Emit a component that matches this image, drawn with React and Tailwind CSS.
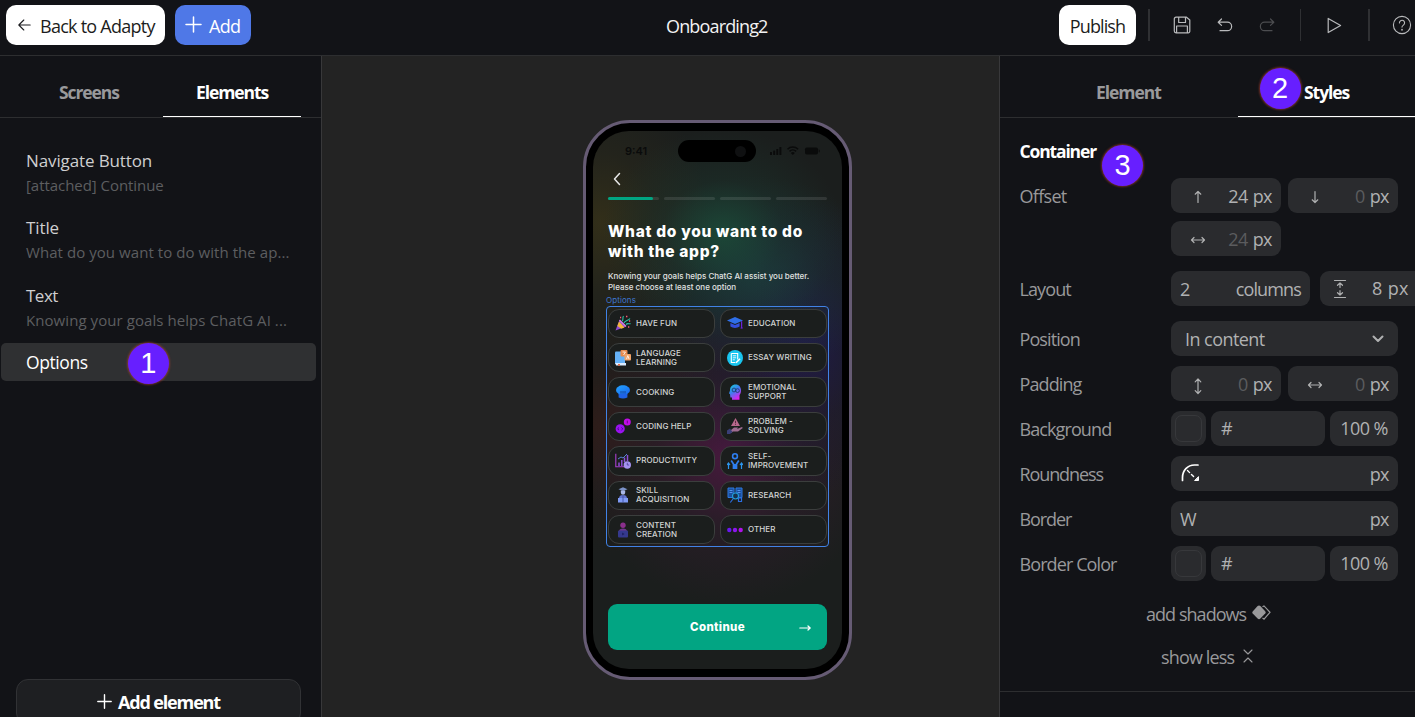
const UI = "[font-family:'Open_Sans',sans-serif]";

/* ---------- small building blocks ---------- */

function Stroke({ w = 20, h = 20, sw = 1.2, className = "", children }) {
  return (
    <svg
      width={w}
      height={h}
      viewBox={`0 0 ${w} ${h}`}
      fill="none"
      stroke="currentColor"
      strokeWidth={sw}
      strokeLinecap="round"
      strokeLinejoin="round"
      className={`shrink-0 ${className}`}
    >
      {children}
    </svg>
  );
}

function Badge({ n, className }) {
  return (
    <div
      className={`absolute z-10 flex size-[41px] items-center justify-center rounded-full bg-[#671fff] text-[29px] leading-none text-white shadow-[0_0_2px_1px_rgba(190,70,50,0.55)] [font-family:'Liberation_Sans',sans-serif] ${className}`}
    >
      {n}
    </div>
  );
}

/* ---------- header ---------- */

function Header() {
  return (
    <header className="relative flex h-14 shrink-0 items-start border-b border-[#2d2e30] pl-1.5 pt-[5px]">
      <button className="flex h-10 w-[159px] items-center rounded-[10px] bg-white pl-3 pt-0.5 text-[18px] tracking-[-0.75px] text-[#1c1d20]">
        <Stroke w={13} h={12} sw={1.1} className="mr-[9px] -mt-0.5">
          <path d="M12.2 6H.8M5.8 1 .8 6l5 5" />
        </Stroke>
        <span className="whitespace-nowrap">Back to Adapty</span>
      </button>
      <button className="ml-2.5 flex h-10 w-[76px] items-center rounded-[10px] bg-[#4f78e7] pl-2.5 pt-0.5 text-[18px] tracking-[-0.7px] text-white">
        <Stroke w={17} h={17} sw={1.5} className="mr-[7px] -mt-1">
          <path d="M8.5 1v15M1 8.5h15" />
        </Stroke>
        Add
      </button>
      <div className="mt-[9px] ml-[415px] w-[102px] whitespace-nowrap text-[18px] leading-6 tracking-[-0.85px] text-[#f2f2f3]">Onboarding2</div>
      <button className="ml-[291px] h-10 w-[77px] rounded-[10px] bg-white pt-0.5 text-center text-[18px] tracking-[-0.9px] text-[#1c1d20]">
        Publish
      </button>
      <div className="mt-1 ml-3 h-8 w-0.5 bg-[#2f3033]" />
      <div className="flex h-10 items-center text-[#b9babc]">
        <Stroke w={18} h={18} className="ml-[23px]">
          <path d="M3 1.2h10.5L16.8 4v11.3a1.5 1.5 0 0 1-1.5 1.5H3a1.7 1.7 0 0 1-1.7-1.7V3A1.7 1.7 0 0 1 3 1.2ZM5.7 1.2v5.3h6.8V1.2M3.6 16.8V10h10.8v6.8" />
        </Stroke>
        <Stroke w={16} h={14} className="ml-[26px]">
          <path d="M4.5 1 1.2 4.2l3.3 3.2M1.2 4.2h9.2a4.2 4.2 0 0 1 0 8.5H3" />
        </Stroke>
        <Stroke w={16} h={14} className="ml-[26px] text-[#4c4d50]">
          <path d="M11.5 1l3.3 3.2-3.3 3.2M14.8 4.2H5.6a4.2 4.2 0 0 0 0 8.5H13" />
        </Stroke>
      </div>
      <div className="mt-1 ml-[25px] h-8 w-px bg-[#2f3033]" />
      <Stroke w={15} h={17} className="mt-3 ml-[26px] text-[#b9babc]">
        <path d="M1.2 1.4v14.2L13.6 8.5Z" />
      </Stroke>
      <div className="mt-1 ml-[26px] h-8 w-0.5 bg-[#2f3033]" />
      <Stroke w={20} h={20} sw={1.1} className="mt-[10px] ml-[22px] text-[#b9babc]">
        <circle cx="10" cy="10" r="8.6" />
        <path d="M7.4 8a2.6 2.6 0 1 1 4 2.1c-.9.6-1.4 1-1.4 2" />
        <path d="M10 14.6v.3" strokeWidth="1.6" />
      </Stroke>
    </header>
  );
}

/* ---------- left panel ---------- */

const elements = [
  ["Navigate Button", "[attached] Continue", "tracking-[-0.12px]", "tracking-[-0.05px]"],
  ["Title", "What do you want to do with the ap...", "tracking-[-0.1px]", "tracking-[0.06px]"],
  ["Text", "Knowing your goals helps ChatG AI ...", "tracking-[-0.5px]", "tracking-[0.07px]"],
];

function LeftPanel() {
  return (
    <aside className="relative flex w-[322px] shrink-0 flex-col border-r border-[#38383a]">
      <div className="flex h-[62px] shrink-0 border-b border-[#2d2e30] text-[17.5px] font-bold leading-6 tracking-[-1.1px]">
        <div className="w-[163px] whitespace-nowrap pl-[59px] pt-6 text-[#99999b]">Screens</div>
        <div className="h-[61px] w-[138px] border-b border-white pt-6 text-center text-white">Elements</div>
      </div>
      <div className="mt-[31px] flex flex-col gap-[18.300px] pl-[26px]">
        {elements.map(([name, sub, t1, t2]) => (
          <div key={name} className="whitespace-nowrap">
            <div className={`h-6 text-[17px] leading-6 text-[#cfcfd0] ${t1}`}>{name}</div>
            <div className={`h-[25px] text-[15px] leading-6 text-[#5d5e60] ${t2}`}>{sub}</div>
          </div>
        ))}
      </div>
      <div className="relative mt-[10.400px] ml-px h-[38px] w-[315px] rounded-[5px] bg-[#2f3032] pl-[25px] pt-[7px] text-[17.5px] leading-6 tracking-[-0.4px] text-white">
        Options
        <Badge n="1" className="top-0 left-[126.500px]" />
      </div>
      <div className="mt-auto ml-4 -mb-2 flex h-[46px] w-[285px] shrink-0 items-start justify-center rounded-xl border border-[#313235] bg-[#1e1f22] pt-2.5 text-[18px] font-bold leading-6 tracking-[-1.150px] text-white">
        <Stroke w={15} h={15} sw={1.4} className="mr-[6px] mt-[4px]">
          <path d="M7.5 .8v13.4M.8 7.5h13.4" />
        </Stroke>
        Add element
      </div>
    </aside>
  );
}

/* ---------- option icons (16 x 16) ---------- */

const optionIcons = {
  fun: (
    <>
      <path d="M.5 15.5 4.5 5l6.5 6.5Z" fill="#8f4bd0" />
      <path d="M2.3 11 4 6.5l5.5 6L6.3 13.7Z" fill="#f3b63a" />
      <path d="M4.5 5 11 11.5" stroke="#d67be0" strokeWidth="1.5" />
      <path d="M7 6c2-1 0-3 1.5-5M9 8c1-3 4-2 6-4.5M11 9.5c2-2 3 0 4.5-1" stroke="#28c3a8" strokeWidth="1.1" fill="none" />
      <path d="M11 1.5h1.4M5 2.5h1.2M14 6h1.2M13 12h1.3" stroke="#ff5a78" strokeWidth="1.3" />
    </>
  ),
  education: (
    <>
      <path d="M0 5.6 8 2l8 3.6L8 9Z" fill="#2f6fe8" />
      <path d="M3.4 8v3.6c2.6 1.8 6.6 1.8 9.2 0V8L8 10Z" fill="#3450dd" />
      <path d="M14.6 6.2v7" stroke="#6b22d8" strokeWidth="1.2" />
      <path d="M13.4 13.6l1.2-2.6 1.3 2.6Z" fill="#6b22d8" />
    </>
  ),
  language: (
    <>
      <rect x="0" y="1.5" width="10" height="12.5" rx="1" fill="#65b1f7" />
      <path d="M0 13h11v2.4H1.2Z" fill="#dcecff" />
      <rect x="5.5" y="0" width="7" height="6.5" rx="1" fill="#e88a4e" />
      <rect x="9.5" y="4" width="6.5" height="6.5" rx="1" fill="#f1a369" />
      <path d="M7.5 2h3l-2 3M11.5 9.2l1.3-3.6 1.3 3.6" stroke="#fff" strokeWidth=".8" fill="none" />
      <path d="M3 14v2l1-.8 1 .8v-2Z" fill="#e46e4c" />
    </>
  ),
  essay: (
    <>
      <circle cx="8" cy="8" r="8" fill="#19c5ef" />
      <path d="M4.3 3.5h6.4v6M4.3 3.5v9h4" stroke="#fff" strokeWidth="1.1" fill="none" />
      <path d="M5.8 5.8h3.4M5.8 7.8h3.4M5.8 9.8h2" stroke="#fff" strokeWidth=".9" />
      <path d="m9 12.8 4-4" stroke="#fff" strokeWidth="1.6" />
    </>
  ),
  cooking: (
    <>
      <path d="M4 10.500 3.200 9.500A3.700 3.700 0 0 1 3.600 2.600C5 1.200 6 1.200 8 1.200s3 0 4.400 1.400A3.700 3.700 0 0 1 12.800 9.500l-.8 1Z" fill="url(#cook)" />
      <path d="M3.600 10h8.800v3.500q-4.400 2-8.800 0Z" fill="#1f62e6" />
      <path d="M6 7v2.600M8 7v2.600M10 7v2.600" stroke="#123a8a" strokeWidth=".8" />
      <defs>
        <linearGradient id="cook" x1="0" y1="0" x2="1" y2="1">
          <stop offset="0" stopColor="#22a6ff" />
          <stop offset="1" stopColor="#1a66ee" />
        </linearGradient>
      </defs>
    </>
  ),
  emotional: (
    <>
      <path d="M5 15.8v-2.300H3.400L3 10l-1-.6L3 6.500C3 3 5 .5 8.600.5S14 3.200 14 6.400c0 2.300-.7 3.300-1.500 4.600v4.800Z" fill="url(#emo)" />
      <circle cx="7" cy="6" r="1.9" fill="none" stroke="#183a66" strokeWidth=".8" />
      <circle cx="10.500" cy="6.600" r="1.900" fill="none" stroke="#183a66" strokeWidth=".8" />
      <defs>
        <linearGradient id="emo" x1="0" y1="0" x2=".6" y2="1">
          <stop offset="0" stopColor="#12d5d5" />
          <stop offset=".5" stopColor="#3e7df0" />
          <stop offset="1" stopColor="#e020f0" />
        </linearGradient>
      </defs>
    </>
  ),
  coding: (
    <>
      <circle cx="5.2" cy="10.800" r="4.600" fill="#9a12f0" />
      <circle cx="12.300" cy="4" r="3.500" fill="#c20be8" />
      <path d="m4 9.500-1.400 1.300L4 12.100M6.400 9.500l1.400 1.300-1.400 1.300" stroke="#3a0870" strokeWidth=".8" fill="none" />
      <path d="M12.300 2.600v2.800" stroke="#50086a" strokeWidth=".8" />
    </>
  ),
  problem: (
    <>
      <path d="M8.500 0 13 8H4Z" fill="#b8688c" />
      <path d="M8.500 2.800v2.500M8.500 6.200v.8" stroke="#401c2c" strokeWidth=".8" />
      <path d="M4 12 7 9.500h4l-1 1.500 5-2 .8 1L11 13.500H6L4 15Z" fill="#a06c92" />
      <path d="m0 12.500 3-2 2.500 3.500-2.500 2H0Z" fill="#3a3f78" />
    </>
  ),
  productivity: (
    <>
      <path d="M.8.8v13h8.500" stroke="#a93fd0" strokeWidth="1.100" fill="none" />
      <path d="M4 13V9.500M6.800 13V7M9.500 9V4.500M12.500 8V2" stroke="#8d4fd8" strokeWidth="1.500" />
      <path d="m3 6 3-2 2 1 4-4" stroke="#5a8ce8" strokeWidth=".9" fill="none" />
      <circle cx="12.300" cy="12" r="3.700" fill="#a592f0" />
      <path d="M12.300 9.800V12h1.800" stroke="#4a3a98" strokeWidth=".8" fill="none" />
    </>
  ),
  self: (
    <>
      <circle cx="8" cy="3.200" r="2.400" fill="none" stroke="#2e7ef0" strokeWidth="1.600" />
      <path d="M4.200 7.500 6.500 11v5h3v-5l2.300-3.500" stroke="#2e7ef0" strokeWidth="1.700" fill="none" />
      <path d="M1.500 16v-5M0 12l1.500-2L3 12M14.500 16v-5M13 12l1.500-2 1.500 2" stroke="#2b97f0" strokeWidth="1.200" fill="none" />
      <path d="M6.500 11h3v5h-3Z" fill="#2e7ef0" />
    </>
  ),
  skill: (
    <>
      <path d="M3.500 2.200 8 .3l4.500 1.900L8 4Z" fill="#7c93c8" />
      <path d="M5.800 3.500h4.400v2a2.200 2.200 0 0 1-4.400 0Z" fill="#a9b7e8" />
      <path d="M4 11.500C4 9 5.500 8 8 8s4 1 4 3.500Z" fill="#6475d0" />
      <path d="M3 11h10v4.500H3Z" fill="#7f9af4" />
      <path d="M8 8v7.500" stroke="#3c4c9a" strokeWidth=".8" />
    </>
  ),
  research: (
    <>
      <path d="M1 1h6v9.500H1ZM9 1h6v9.500H9Z" fill="#1b4f9c" stroke="#2d78e0" strokeWidth="1" />
      <path d="M2.500 3.500h3M2.500 5.500h3M10.500 3.500h3M10.500 5.500h3" stroke="#5ea2ff" strokeWidth=".8" />
      <circle cx="8.500" cy="9" r="3" fill="#16324f" stroke="#21a0d8" strokeWidth="1.100" />
      <path d="m6.300 11.500-3 4M11.500 11h3v3.500h-3Z" stroke="#2a6ee0" strokeWidth="1.200" fill="none" />
    </>
  ),
  content: (
    <>
      <circle cx="8" cy="3.200" r="2.700" fill="#8a2f8c" />
      <path d="M4 9.500C4 7.500 5.500 6.500 8 6.500s4 1 4 3Z" fill="#71358f" />
      <rect x="3" y="8.500" width="10" height="7" rx="1" fill="#35398e" />
      <path d="m7.200 10.500 2.300 1.500-2.300 1.500Z" fill="#1c1f5c" />
    </>
  ),
  other: (
    <>
      <circle cx="2.300" cy="8" r="2.200" fill="#6a18f0" />
      <circle cx="8" cy="8" r="2.200" fill="#8c16ee" />
      <circle cx="13.700" cy="8" r="2.200" fill="#b012ea" />
    </>
  ),
};

const options = [
  ["fun", ["HAVE FUN"]],
  ["education", ["EDUCATION"]],
  ["language", ["LANGUAGE", "LEARNING"]],
  ["essay", ["ESSAY WRITING"]],
  ["cooking", ["COOKING"]],
  ["emotional", ["EMOTIONAL", "SUPPORT"]],
  ["coding", ["CODING HELP"]],
  ["problem", ["PROBLEM -", "SOLVING"]],
  ["productivity", ["PRODUCTIVITY"]],
  ["self", ["SELF-", "IMPROVEMENT"]],
  ["skill", ["SKILL", "ACQUISITION"]],
  ["research", ["RESEARCH"]],
  ["content", ["CONTENT", "CREATION"]],
  ["other", ["OTHER"]],
];

function StatusBar() {
  return (
    <div className="flex h-[31px] items-start text-[#0a0b0b]">
      <div className="mt-[13px] ml-8 w-[53px] text-[11px] font-semibold leading-[14px]">9:41</div>
      <div className="mt-[9px] flex h-[22px] w-[78px] items-center justify-end rounded-full bg-black pr-2.5">
        <div className="size-[11px] rounded-full bg-[#0f1011]" />
      </div>
      <svg width="52" height="10" viewBox="0 0 52 10" fill="currentColor" className="mt-[15px] ml-[13px]">
        <rect x="1" y="6" width="2" height="3" rx=".6" />
        <rect x="4.200" y="4.500" width="2" height="4.500" rx=".6" />
        <rect x="7.300" y="3" width="2" height="6" rx=".6" />
        <rect x="10.400" y="1" width="2" height="8" rx=".6" />
        <path d="M18.500 3.300a7.500 7.500 0 0 1 10.600 0M20.500 5.400a4.700 4.700 0 0 1 6.600 0" fill="none" stroke="currentColor" strokeWidth="1.500" />
        <path d="m23.800 9 2-2a3 3 0 0 0-4 0Z" />
        <rect x="36" y="1.500" width="13" height="7" rx="1.800" />
        <rect x="49.700" y="3.800" width="1" height="2.500" />
      </svg>
    </div>
  );
}

function Phone() {
  return (
    <div className="h-[560px] w-[269px] rounded-[47px] border-[3px] border-[#665b74] bg-black px-[7px] py-2">
      <div className="flex h-[538px] w-[249px] flex-col overflow-hidden rounded-[36px] bg-[#1b1e1d] bg-[radial-gradient(ellipse_120px_105px_at_52%_19%,rgba(28,78,58,0.8),rgba(28,60,50,0.35)_50%,transparent),radial-gradient(ellipse_110px_140px_at_3%_17%,rgba(58,52,24,0.75),rgba(50,46,26,0.35)_50%,transparent),radial-gradient(ellipse_130px_100px_at_65%_27%,rgba(28,72,76,0.6),rgba(28,60,66,0.3)_50%,transparent),radial-gradient(ellipse_130px_150px_at_85%_40%,rgba(32,26,78,0.8),rgba(30,26,58,0.4)_50%,transparent),radial-gradient(ellipse_150px_150px_at_55%_60%,rgba(80,24,68,0.85),rgba(58,28,52,0.4)_50%,transparent),radial-gradient(ellipse_110px_130px_at_3%_55%,rgba(56,28,20,0.6),rgba(44,28,24,0.3)_50%,transparent)] [font-family:Inter,sans-serif]">
        <StatusBar />
        <div className="flex flex-col pl-[15px]">
          <Stroke w={8} h={14} sw={1.500} className="mt-[10px] ml-[5px] text-[#e6e6e6]">
            <path d="M6.500 1.500 1.500 7l5 5.500" />
          </Stroke>
          <div className="mt-[11px] flex w-[218.500px] gap-[5px]">
            <div className="h-[3px] flex-1 rounded-full bg-white/10">
              <div className="h-[3px] w-[45px] rounded-full bg-[#00a582]" />
            </div>
            <div className="h-[3px] flex-1 rounded-full bg-white/10" />
            <div className="h-[3px] flex-1 rounded-full bg-white/10" />
            <div className="h-[3px] flex-1 rounded-full bg-white/10" />
          </div>
          <div className="mt-[22px] whitespace-nowrap text-[15.5px] font-extrabold leading-5 text-white">
            <div className="tracking-[0.700px]">What do you want to do</div>
            <div className="tracking-[0.650px]">with the app?</div>
          </div>
          <div className="mt-[9px] whitespace-nowrap text-[8px] font-medium leading-[11px] tracking-[-0.01px] text-[#e0e2e1]">
            <div>Knowing your goals helps ChatG AI assist you better.</div>
            <div>Please choose at least one option</div>
          </div>
        </div>
        <div className="ml-[13px] mt-[2px] h-[10px] text-[8px] leading-[10px] tracking-[0.1px] text-[#3f76cf]">Options</div>
        <div className="ml-[13px] mt-px grid h-[241px] w-[223px] grid-cols-[107px_107px] grid-rows-7 gap-x-[5px] gap-y-[5.200px] rounded-[4px] border border-[#4182e6] py-[1.500px] pl-px">
          {options.map(([icon, lines]) => (
            <div key={icon} className="flex items-center rounded-[11px] border border-[#3b3e3d] bg-[#1b1e1d] pl-1.5">
              <svg width="16" height="16" viewBox="0 0 16 16" className="mr-[5px] shrink-0">
                {optionIcons[icon]}
              </svg>
              <div className="whitespace-nowrap text-[8px] font-medium leading-[9px] tracking-[0.080px] text-[#d2d4d3]">
                {lines.map((l) => (
                  <div key={l}>{l}</div>
                ))}
              </div>
            </div>
          ))}
        </div>
        <div className="relative mt-[57px] ml-[15px] flex h-[46px] w-[219px] shrink-0 items-center justify-center rounded-[9px] bg-[#02a583] pt-0.5 text-[11.500px] font-extrabold tracking-[0.350px] text-white">
          Continue
          <Stroke w={12} h={8} sw={1.200} className="absolute right-4 top-5">
            <path d="M.8 4h10.400M9 2l2.200 2L9 6" />
          </Stroke>
        </div>
      </div>
    </div>
  );
}

/* ---------- right panel ---------- */

function Field({ className = "", children }) {
  return (
    <div className={`flex h-[35px] shrink-0 items-center rounded-[9px] bg-[#2a2b2e] text-[18px] tracking-[-0.55px] text-[#b0b1b2] ${className}`}>
      {children}
    </div>
  );
}

const arrows = {
  up: <path d="M10 15.500V4.500M7.200 7.200 10 4.500l2.800 2.700" />,
  down: <path d="M10 4.500v11M7.200 12.800 10 15.500l2.800-2.700" />,
  horizontal: <path d="M3.500 10h13M6 7.500 3.500 10 6 12.500M14 7.500l2.500 2.500-2.500 2.500" />,
  vertical: <path d="M10 3v14.500M7.200 5.800 10 3l2.800 2.800M7.200 14.700l2.800 2.800 2.800-2.800" />,
};

function PxField({ arrow, value, muted }) {
  return (
    <Field className="w-[110px] pl-[17px] pr-[9px]">
      <Stroke className={arrow === "vertical" ? "mt-1" : "mt-0.5"}>{arrows[arrow]}</Stroke>
      <span className={`ml-auto mt-0.5 ${muted ? "text-[#5b5c5e]" : ""}`}>{value}</span>
      <span className="ml-[5px] mt-0.5">px</span>
    </Field>
  );
}

function Row({ label, className = "h-[45px]", tracking = "tracking-[-0.9px]", children }) {
  return (
    <div className={`flex shrink-0 items-start ${className}`}>
      <div className={`w-[151.500px] shrink-0 whitespace-nowrap pt-1.5 text-[18px] leading-6 text-[#99999b] ${tracking}`}>{label}</div>
      {children}
    </div>
  );
}

function ColorFields() {
  return (
    <div className="flex gap-[5px]">
      <Field className="w-[35px] justify-center">
        <div className="size-[27px] rounded-[7px] border border-[#37383b]" />
      </Field>
      <Field className="w-[114px] pl-2.5 font-medium">#</Field>
      <Field className="w-[68px] justify-center tracking-[-0.1px]">100 %</Field>
    </div>
  );
}

function RightPanel() {
  return (
    <aside className="relative flex w-[416px] shrink-0 flex-col overflow-hidden border-l border-[#38383a]">
      <div className="flex h-[62px] shrink-0 border-b border-[#2d2e30] text-[17.500px] font-bold leading-6 tracking-[-1.050px]">
        <div className="w-[238px] pl-24 pt-6 text-[#99999b]">Element</div>
        <div className="h-[61px] flex-1 border-b border-white pl-[66px] pt-6 text-white">Styles</div>
      </div>
      <Badge n="2" className="left-[259.500px] top-[12px]" />
      <Badge n="3" className="left-[102px] top-[89px]" />
      <div className="flex flex-col pl-[19.500px]">
        <div className="mt-[21px] h-[39px] text-[17.500px] font-bold leading-6 tracking-[-1.150px] text-white">Container</div>
        <Row label="Offset" className="h-[93px]" tracking="tracking-[-0.7px]">
          <div className="flex w-[230px] flex-wrap gap-x-[7px] gap-y-2">
            <PxField arrow="up" value="24" />
            <PxField arrow="down" value="0" muted />
            <PxField arrow="horizontal" value="24" muted />
          </div>
        </Row>
        <Row label="Layout" className="h-[50px]">
          <Field className="w-[139px] justify-between px-[9px] pt-0.5 tracking-[-0.850px]">
            <span>2</span>
            <span>columns</span>
          </Field>
          <Field className="ml-2.5 w-[110px] pl-2.5">
            <Stroke>
              <path d="M4.500 1.500h11M4.500 18.500h11M10 4v4.500M7.500 6.300 10 4l2.500 2.300M10 11.500V16M7.500 13.700 10 16l2.500-2.300" />
            </Stroke>
            <span className="ml-[22px] -mt-px whitespace-nowrap tracking-[0.350px]">8 px</span>
          </Field>
        </Row>
        <Row label="Position">
          <Field className="w-[227px] justify-between pl-3.5 pr-3.5 pt-0.5 tracking-[-0.550px]">
            In content
            <Stroke w={12} h={8} sw={2} className="-mt-0.5">
              <path d="m1.500 1.500 4.500 4.500 4.500-4.500" />
            </Stroke>
          </Field>
        </Row>
        <Row label="Padding">
          <div className="flex gap-[7px]">
            <PxField arrow="vertical" value="0" muted />
            <PxField arrow="horizontal" value="0" muted />
          </div>
        </Row>
        <Row label="Background">
          <ColorFields />
        </Row>
        <Row label="Roundness" tracking="tracking-[-1.1px]">
          <Field className="w-[227px] justify-between pl-2.5 pr-[9px]">
            <Stroke w={20} h={20} sw={1.700} className="-mt-0.5 text-white">
              <path d="M1.500 17.500v-3C1.500 7.500 6.500 2 13.500 2H17" />
              <path d="m6.500 7.500 6.500 6.500" strokeDasharray="3 2.600" strokeWidth="1.400" />
              <path d="M17.500 14v3.500h-3.500Z" fill="currentColor" strokeWidth="1" />
            </Stroke>
            <span className="mt-0.5">px</span>
          </Field>
        </Row>
        <Row label="Border" tracking="tracking-[-1.1px]">
          <Field className="w-[227px] justify-between pl-[9px] pr-[9px] pt-0.5">
            <span>W</span>
            <span>px</span>
          </Field>
        </Row>
        <Row label="Border Color">
          <ColorFields />
        </Row>
      </div>
      <div className="mt-[11px] flex h-6 items-center pl-[146px] text-[18px] leading-6 tracking-[-0.950px] text-[#99999b]">
        <span className="whitespace-nowrap">add shadows</span>
        <svg width="19" height="16" viewBox="0 0 19 16" className="ml-[6px] -mt-0.5 shrink-0">
          <path d="M10.500 1.800 12 .9l6 6.400-6 6.800-1.500-1" fill="none" stroke="#99999b" strokeWidth="1.200" />
          <path d="M7 .5c.6 0 1 .2 1.400.6l5 5.300c.5.600.5 1.200 0 1.800l-5 5.400c-.8.800-2 .8-2.800 0L.7 8.400c-.6-.7-.6-1.300 0-2L5.600 1.100C6 .700 6.500.500 7 .500Z" fill="#99999b" />
        </svg>
      </div>
      <div className="mt-[19px] flex h-6 items-center pl-[161px] text-[18px] leading-6 tracking-[-0.850px] text-[#99999b]">
        <span className="whitespace-nowrap">show less</span>
        <Stroke w={10} h={14} sw={1.100} className="ml-[9px] -mt-0.5">
          <path d="M1 1l4 4 4-4M1 13l4-4 4 4" />
        </Stroke>
      </div>
      <div className="mt-[22px] h-px shrink-0 bg-[#2d2e30]" />
    </aside>
  );
}

export default function App() {
  return (
    <div className={`flex h-[717px] w-[1415px] flex-col overflow-hidden bg-[#121317] ${UI}`}>
      <Header />
      <div className="flex min-h-0 flex-1">
        <LeftPanel />
        <main className="flex min-w-0 flex-1 items-start bg-[#232323] pl-[261px] pt-16">
          <Phone />
        </main>
        <RightPanel />
      </div>
    </div>
  );
}
